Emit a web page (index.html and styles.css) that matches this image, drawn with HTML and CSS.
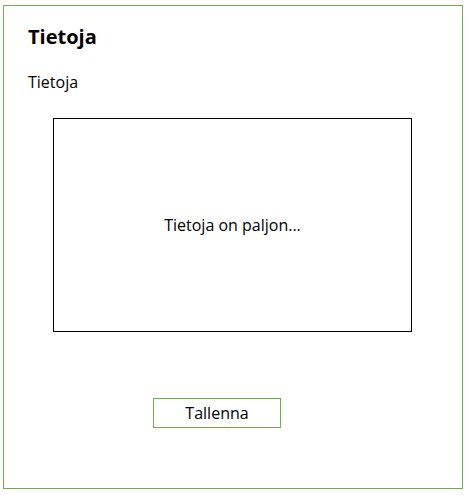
FILE: index.html
```html
<!DOCTYPE html>
<html lang="fi">
<head>
    <meta charset="UTF-8">
    <meta name="viewport" content="width=device-width, initial-scale=1.0">
    <title>Tietoja</title>
    <link rel="stylesheet" href="styles.css">
</head>
<body>

<div class="panel">
    <h1 class="title">Tietoja</h1>
    <p class="label">Tietoja</p>
    <div class="info">Tietoja on paljon...</div>
    <button class="save">Tallenna</button>
</div>

</body>
</html>
```

FILE: styles.css
```css
body {
    font-family: "Open Sans", "Noto Sans", sans-serif;
    margin: 0;
    padding: 5px 0 0 3px;
    background-color: #fff;
    color: #000;
}

.panel {
    box-sizing: border-box;
    width: 460px;
    height: 484px;
    border: 1px solid #70ad47;
    padding: 0 0 0 24px;
    display: flex;
    flex-direction: column;
    align-items: flex-start;
}

.title {
    font-size: 20px;
    font-weight: 700;
    margin: 17px 0 0 0;
    line-height: 28px;
}

.label {
    font-size: 16px;
    margin: 21px 0 0 0;
    line-height: 20px;
}

.info {
    box-sizing: border-box;
    width: 359px;
    height: 214px;
    margin: 26px 0 0 25px;
    border: 1px solid #000;
    display: flex;
    justify-content: center;
    align-items: center;
    font-size: 16px;
}

.save {
    box-sizing: border-box;
    width: 128px;
    height: 30px;
    margin: 66px 0 0 125px;
    border: 1px solid #70ad47;
    background-color: #fff;
    font-family: inherit;
    font-size: 16px;
    color: #000;
    padding: 0;
    cursor: pointer;
}
```
